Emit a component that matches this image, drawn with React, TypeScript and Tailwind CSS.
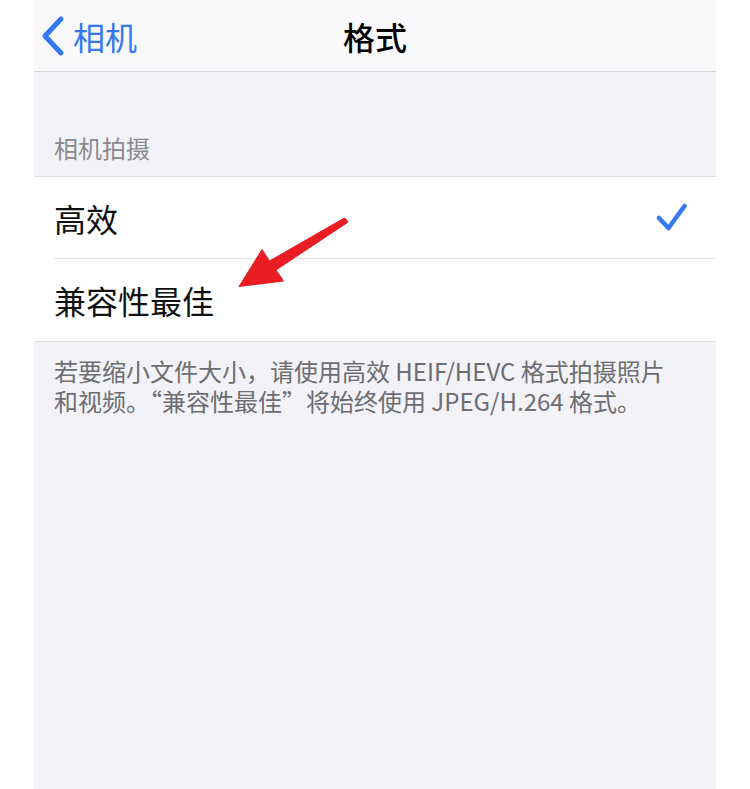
import React from 'react'

const font = { fontFamily: '"Noto Sans CJK SC", "Noto Sans", sans-serif' }

function BackChevron() {
  return (
    <svg width="26" height="42" viewBox="0 0 26 42" className="shrink-0" aria-hidden="true">
      <polyline
        points="21,4 5,21 21,38"
        fill="none"
        stroke="#3478f6"
        strokeWidth="5"
        strokeLinecap="round"
        strokeLinejoin="round"
      />
    </svg>
  )
}

function Check() {
  return (
    <svg width="32" height="30" viewBox="0 0 32 30" aria-hidden="true">
      <polyline
        points="3,15 12.5,25 28.5,3"
        fill="none"
        stroke="#3478f6"
        strokeWidth="4.5"
        strokeLinecap="round"
        strokeLinejoin="round"
      />
    </svg>
  )
}

const options = [
  { label: '高效', checked: true },
  { label: '兼容性最佳', checked: false },
]

export default function App() {
  return (
    <div className="w-full min-h-screen bg-white" style={font}>
      <div className="relative ml-[34px] w-[682px] min-h-[789px] bg-[#f2f2f7]">
        {/* nav bar */}
        <header className="grid h-[72px] grid-cols-[1fr_auto_1fr] items-center border-b border-[#d4d4d8] bg-[#f9f9fb]">
          <div className="flex items-center gap-[7px] pl-[6px]">
            <BackChevron />
            <span className="text-[32px] leading-none text-[#3478f6]">相机</span>
          </div>
          <h1 className="text-[32px] font-medium leading-none text-black">格式</h1>
          <div />
        </header>

        {/* section header */}
        <div className="flex h-[104px] items-end px-[20px] pb-[12px]">
          <span className="text-[24px] leading-[32px] text-[#8a8a8e]">相机拍摄</span>
        </div>

        {/* options list */}
        <ul className="border-y border-[#dcdce0] bg-white">
          {options.map(({ label, checked }, i) => (
            <li key={label} className="pl-[20px]">
              <div
                className={`flex h-[82px] items-center justify-between pr-[28px] ${
                  i < options.length - 1 ? 'border-b border-[#e2e2e6]' : ''
                }`}
              >
                <span className="text-[32px] leading-none text-[#111]">{label}</span>
                {checked && <Check />}
              </div>
            </li>
          ))}
        </ul>

        {/* footer note */}
        <div className="px-[20px] pt-[14px] text-[24px] leading-[30px] text-[#6d6d72]">
          <p>若要缩小文件大小，请使用高效 HEIF/HEVC 格式拍摄照片</p>
          <p>和视频。“兼容性最佳”将始终使用 JPEG/H.264 格式。</p>
        </div>

        {/* red annotation arrow */}
        <svg
          className="pointer-events-none absolute left-0 top-0"
          width="682"
          height="789"
          viewBox="34 0 682 789"
          aria-hidden="true"
        >
          <path
            d="M343.5 218.5 Q347 218 347.5 222.5 L276 270 L283.5 281 L239 286.5 L262 249.5 L269.5 261 Z"
            fill="#ea1c24"
            stroke="#ea1c24"
            strokeWidth="1"
            strokeLinejoin="round"
          />
        </svg>
      </div>
    </div>
  )
}
